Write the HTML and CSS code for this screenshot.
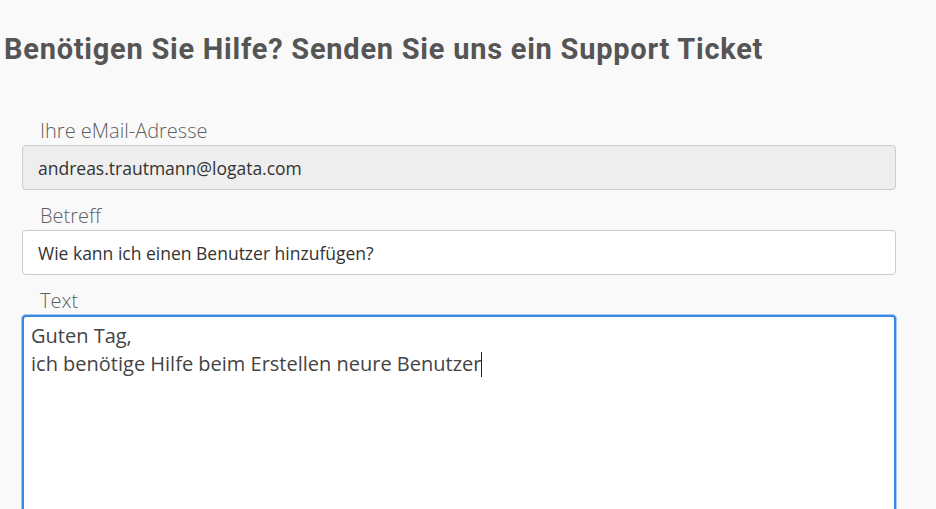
FILE: index.html
```html
<!DOCTYPE html>
<html lang="de">
<head>
<meta charset="utf-8">
<link rel="stylesheet" href="styles.css">
</head>
<body>
<h1 class="title">Benötigen Sie Hilfe? Senden Sie uns ein Support Ticket</h1>
<form class="form">
  <div class="field">
    <label class="label">Ihre eMail-Adresse</label>
    <div class="input input-disabled">andreas.trautmann@logata.com</div>
  </div>
  <div class="field">
    <label class="label">Betreff</label>
    <div class="input">Wie kann ich einen Benutzer hinzufügen?</div>
  </div>
  <div class="field">
    <label class="label">Text</label>
    <div class="textarea"><div>Guten Tag,</div><div>ich benötige Hilfe beim Erstellen neure Benutzer<span class="caret"></span></div></div>
  </div>
</form>
</body>
</html>
```
FILE: styles.css
```css
html, body {
  margin: 0;
  padding: 0;
  background: #f9f9f9;
  height: 100%;
  overflow: hidden;
}
body {
  padding: 0 4px;
}
.title {
  font-family: Roboto, "Liberation Sans", sans-serif;
  font-weight: 700;
  font-size: 29px;
  letter-spacing: 0.75px;
  line-height: 34px;
  color: #555;
  margin: 32px 0 0 0;
}
.form {
  margin: 50px 36px 0 18px;
  display: flex;
  flex-direction: column;
  gap: 11px;
}
.field {
  display: flex;
  flex-direction: column;
}
.label {
  font-family: "Open Sans", sans-serif;
  font-weight: 300;
  font-size: 20px;
  line-height: 26px;
  color: #5f5f5f;
  padding: 2px 0 0 18px;
  margin-bottom: 1px;
}
.input {
  box-sizing: border-box;
  height: 45px;
  border: 1px solid #ccc;
  border-radius: 4px;
  background: #fff;
  font-family: "Open Sans", sans-serif;
  font-size: 17.5px;
  color: #333;
  display: flex;
  align-items: center;
  padding: 0 15px;
}
.input-disabled {
  background: #eee;
}
.textarea {
  box-sizing: border-box;
  height: 260px;
  border: 2px solid #3a86e0;
  box-shadow: 0 0 0 1px #a0c8f2;
  border-radius: 4px;
  background: #fff;
  font-family: "Open Sans", sans-serif;
  font-size: 20px;
  line-height: 28px;
  color: #444;
  padding: 5px 7px;
}
.caret {
  display: inline-block;
  width: 1px;
  height: 25px;
  background: #222;
  vertical-align: -6px;
}
```
